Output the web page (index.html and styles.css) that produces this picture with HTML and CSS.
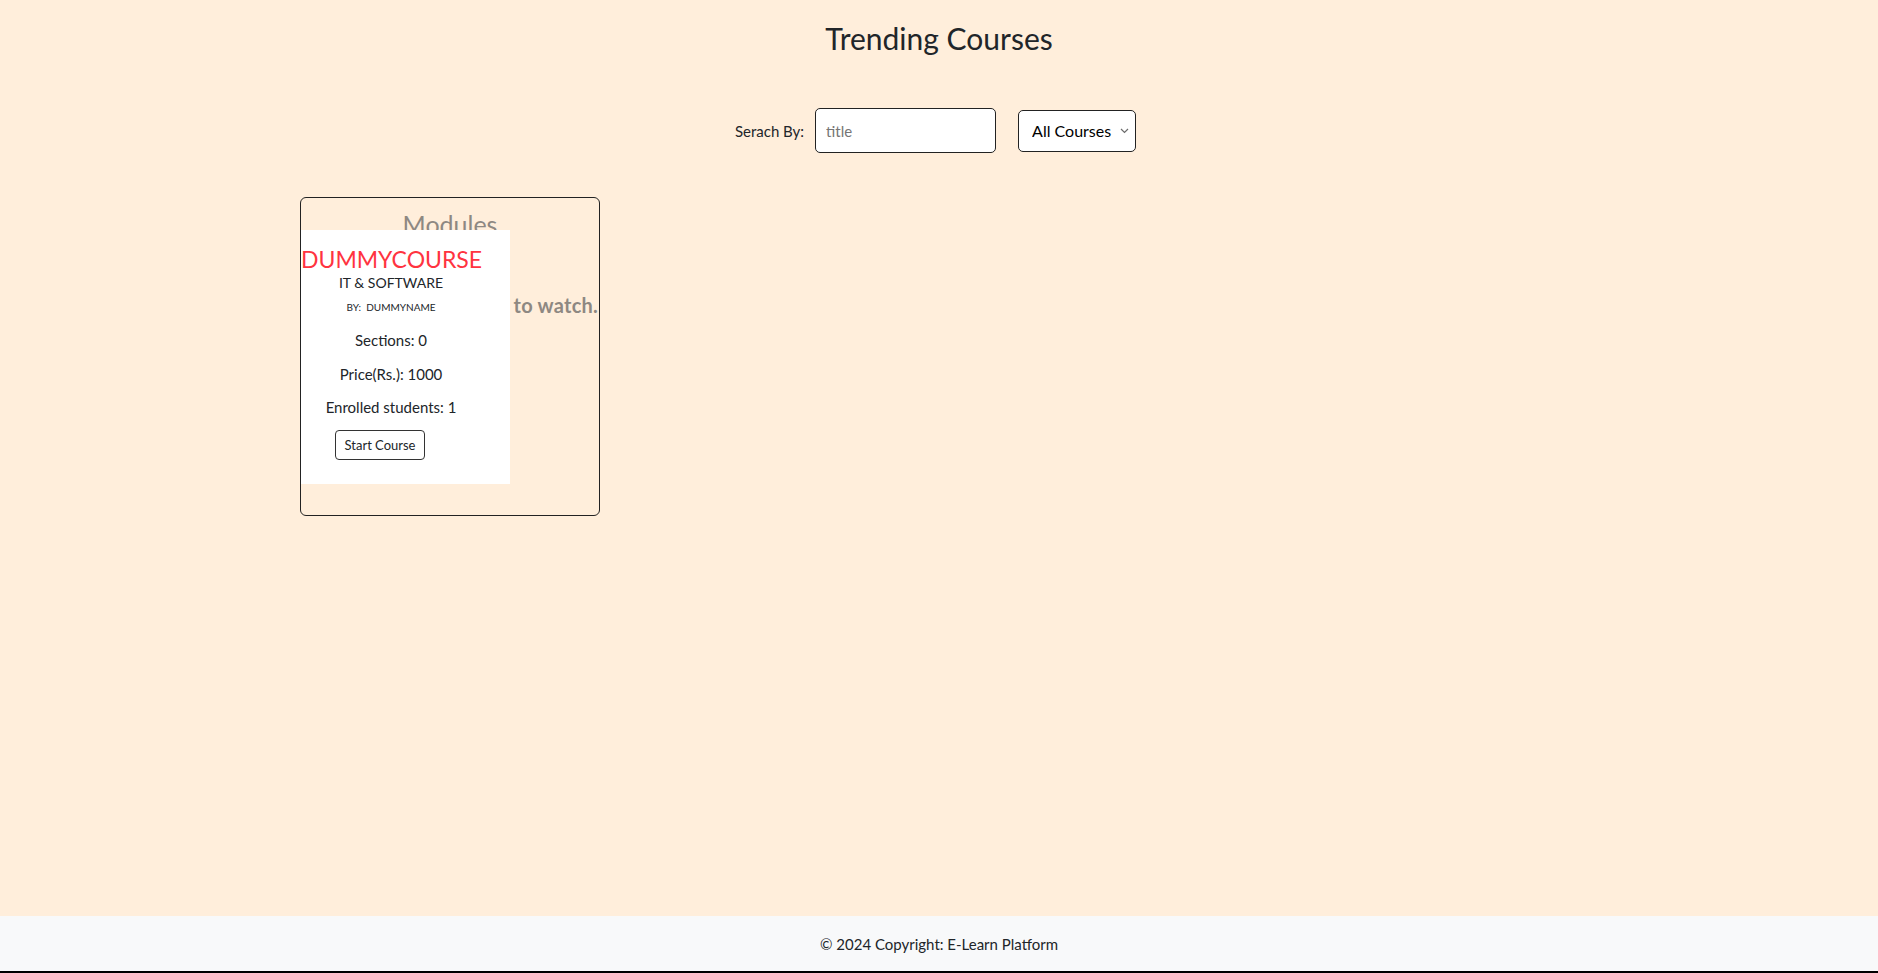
FILE: index.html
```html
<!DOCTYPE html>
<html lang="en">
<head>
<meta charset="utf-8">
<title>Trending Courses</title>
<link rel="stylesheet" href="styles.css">
</head>
<body>
<main class="page">
  <h1 class="page-title">Trending Courses</h1>
  <div class="search">
    <label class="search-label" for="q">Serach By:</label>
    <input class="search-input" id="q" type="text" placeholder="title">
    <span class="select-wrap">
      <select class="search-select">
        <option>All Courses</option>
      </select>
      <svg class="select-arrow" width="9" height="6" viewBox="0 0 9 6" aria-hidden="true"><path d="M1 1 L4.5 4.5 L8 1" fill="none" stroke="#6b6b6b" stroke-width="1.2"/></svg>
    </span>
  </div>
  <div class="courses">
    <div class="card">
      <h3 class="modules-title">Modules</h3>
      <p class="modules-hint">Please select a module to watch.</p>
      <div class="course">
        <div class="course-inner">
          <div class="course-name">DUMMYCOURSE</div>
          <div class="course-cat">IT &amp; SOFTWARE</div>
          <div class="course-by">BY:&nbsp; DUMMYNAME</div>
          <p class="course-stat">Sections: 0</p>
          <p class="course-stat">Price(Rs.): 1000</p>
          <p class="course-stat">Enrolled students: 1</p>
        </div>
        <button class="start-btn" type="button">Start Course</button>
      </div>
    </div>
  </div>
</main>
<footer class="footer">© 2024 Copyright: E-Learn Platform</footer>
</body>
</html>
```
FILE: styles.css
```css
html, body {
  margin: 0;
  padding: 0;
}
body {
  font-family: Lato, "Open Sans", "Liberation Sans", sans-serif;
  background: #ffeedb;
  color: #212529;
  min-height: 100vh;
  display: flex;
  flex-direction: column;
}
.page {
  flex: 1;
}
.page-title {
  margin: 20px 0 0;
  font-size: 30px;
  line-height: 36px;
  font-weight: 400;
  text-align: center;
}
.search {
  display: flex;
  justify-content: center;
  align-items: center;
  margin-top: 52px;
}
.search-label {
  font-size: 15px;
  margin-right: 11px;
}
.search-input {
  box-sizing: border-box;
  width: 181px;
  height: 45px;
  border: 1px solid #222;
  border-radius: 5px;
  padding: 0 10px;
  font-family: inherit;
  font-size: 15px;
  background: #fff;
  color: #212529;
}
.search-input::placeholder {
  color: #757575;
}
.select-wrap {
  position: relative;
  display: block;
  margin-left: 22px;
  margin-right: 7px;
  height: 42px;
}
.search-select {
  -webkit-appearance: none;
  appearance: none;
  box-sizing: border-box;
  width: 118px;
  height: 42px;
  border: 1px solid #222;
  border-radius: 5px;
  padding: 0 20px 0 13px;
  font-family: inherit;
  font-size: 16px;
  background: #fff;
  color: #000;
}
.select-arrow {
  position: absolute;
  right: 7px;
  top: 18px;
  pointer-events: none;
}
.courses {
  width: 1278px;
  margin: 44px auto 0;
  display: flex;
  flex-wrap: wrap;
}
.card {
  position: relative;
  box-sizing: border-box;
  width: 300px;
  height: 319px;
  border: 1px solid #222;
  border-radius: 6px;
  text-align: center;
}
.modules-title {
  margin: 11px 0 0;
  font-size: 25px;
  line-height: 30px;
  font-weight: 400;
  color: #8e8882;
}
.modules-hint {
  margin: 54px 0 0;
  font-size: 20px;
  line-height: 24px;
  font-weight: 700;
  letter-spacing: 0.25px;
  color: #8e8882;
  white-space: nowrap;
}
.course {
  position: absolute;
  top: 32px;
  left: 0;
  box-sizing: border-box;
  width: 209px;
  height: 254px;
  background: #fff;
  padding: 14px 0 0;
}
.course-inner {
  width: 180px;
  text-align: center;
}
.course-name {
  font-size: 23px;
  line-height: 30px;
  color: #ff3340;
  white-space: nowrap;
}
.course-cat {
  margin-top: 0;
  font-size: 14px;
  line-height: 17px;
}
.course-by {
  margin-top: 10px;
  font-size: 10px;
  line-height: 12px;
}
.course-stat {
  margin: 15.5px 0 0;
  font-size: 15px;
  line-height: 18px;
}
.course-by + .course-stat {
  margin-top: 18px;
}
.start-btn {
  display: block;
  margin: 14px 0 0 34px;
  box-sizing: border-box;
  width: 90px;
  height: 30px;
  border: 1px solid #333;
  border-radius: 4px;
  background: #fff;
  font-family: inherit;
  font-size: 13px;
  color: #212529;
  padding: 0;
}
.footer {
  box-sizing: border-box;
  height: 57px;
  background: #f8f9fa;
  border-bottom: 2px solid #000;
  display: flex;
  align-items: center;
  justify-content: center;
  font-size: 15px;
}
```
